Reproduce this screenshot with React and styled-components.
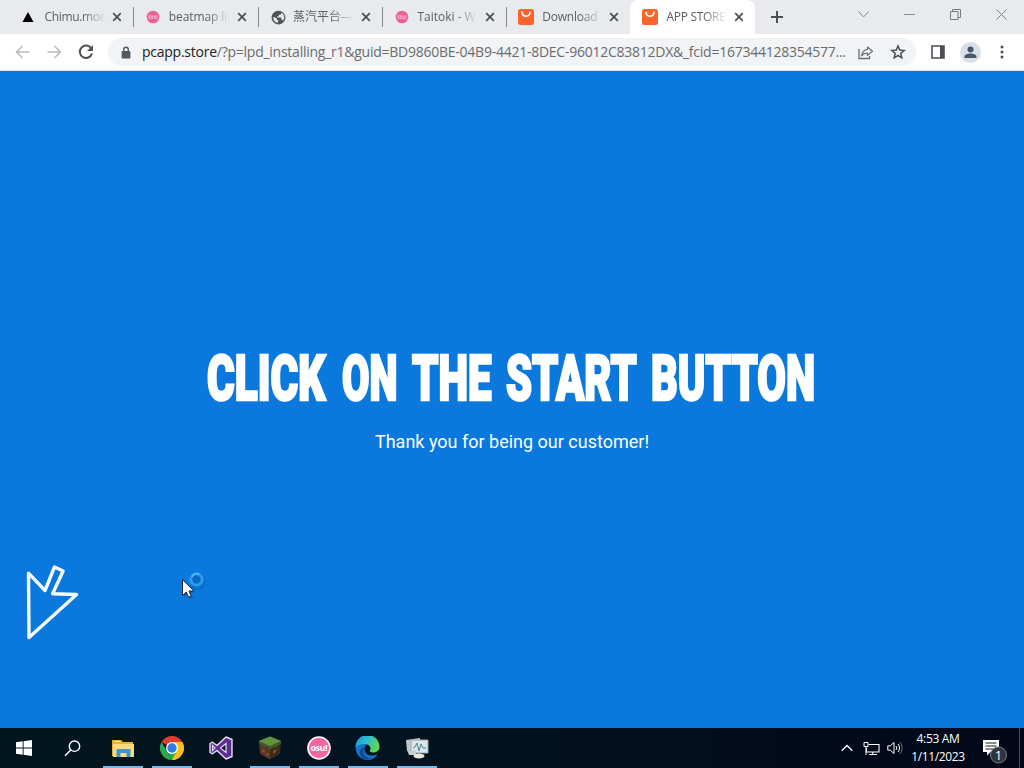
import React from "react";
import styled, { createGlobalStyle } from "styled-components";

const GlobalStyle = createGlobalStyle`
* {
    box-sizing: border-box;
}
body {
    margin: 0;
    overflow: hidden;
    font-family: "Open Sans", "Noto Sans CJK SC", sans-serif;
}
svg {
    display: block;
    flex: none;
}
`
const Screen = styled.div`
width: 1024px;
height: 768px;
display: flex;
flex-direction: column;
overflow: hidden;
`

/* ---- tab strip ---- */
const TabStrip = styled.div`
height: 34px;
flex: none;
display: flex;
background: #e8eaed;
padding-left: 9px;
`
const Tab = styled.div`
width: 124.3px;
height: 34px;
flex: none;
display: flex;
align-items: center;
padding: 0 11px 0 ${props => props.$big ? "12px" : "13px"};
border-radius: 8px 8px 0 0;
background: ${props => props.$active ? "#fff" : "transparent"};
`
const TabDivider = styled.span`
width: 1px;
height: 20px;
flex: none;
align-self: center;
margin: 0 -1px 0 0;
background: #85888c;
`
const Favicon = styled.span`
width: ${props => props.$big ? "24px" : "22.5px"};
flex: none;
`
const TabTitle = styled.span`
width: 61px;
flex: none;
overflow: hidden;
white-space: nowrap;
font-size: 12px;
line-height: 18px;
letter-spacing: ${props => props.$spacing || "0"};
color: #5c6065;
mask-image: linear-gradient(to right, #000 62%, transparent 100%);
`
const CloseIcon = styled.svg`
margin-left: auto;
`
const NewTab = styled.div`
width: 44px;
display: flex;
align-items: center;
justify-content: center;
`
const WindowButtons = styled.div`
margin-left: auto;
display: flex;
align-items: center;
height: 29px;
`
const WindowButton = styled.span`
width: 46px;
display: flex;
justify-content: center;
`

/* ---- toolbar ---- */
const Toolbar = styled.div`
height: 37px;
flex: none;
display: flex;
align-items: center;
background: #fff;
border-bottom: 1px solid #d5e6f5;
padding: 0 6px 0 6px;
`
const ToolButton = styled.span`
width: 32px;
flex: none;
display: flex;
align-items: center;
justify-content: center;
`
const AddressBar = styled.div`
width: 808px;
height: 28px;
flex: none;
display: flex;
align-items: center;
margin-left: 6px;
margin-right: 6px;
padding-left: 13px;
border-radius: 14px;
background: #f1f3f4;
`
const Url = styled.span`
width: 708px;
flex: none;
margin-left: 11px;
font-size: 14px;
line-height: 20px;
letter-spacing: -0.25px;
white-space: nowrap;
color: #686c71;
`
const Host = styled.span`
color: #202124;
`
const Avatar = styled.span`
width: 21px;
height: 21px;
border-radius: 50%;
background: #d9dfe6;
display: flex;
align-items: center;
justify-content: center;
`

/* ---- page ---- */
const Page = styled.main`
height: 657px;
flex: none;
position: relative;
background: #0a78dc;
color: #fff;
display: flex;
flex-direction: column;
align-items: center;
padding-top: 271px;
`
const Title = styled.h1`
margin: 0;
width: 610px;
height: 72px;
display: flex;
gap: 14px;
font-family: Roboto, sans-serif;
font-size: 63px;
line-height: 73px;
font-weight: 900;
-webkit-text-stroke: 2.6px #fff;
`
const Word = styled.span`
width: ${props => props.$width}px;
flex: none;
display: block;
white-space: nowrap;
`
const Squeeze = styled.span`
display: inline-block;
transform: scaleX(${props => props.$scale});
transform-origin: left center;
`
const Thanks = styled.p`
margin: 15px 0 0;
font-family: Roboto, sans-serif;
font-size: 18px;
line-height: 26px;
`
const StartArrow = styled.svg`
position: absolute;
left: 20px;
top: 485px;
`
const Pointer = styled.svg`
position: absolute;
left: 178px;
top: 497px;
`

/* ---- taskbar ---- */
const Taskbar = styled.footer`
height: 40px;
flex: none;
display: flex;
background: linear-gradient(to right, #02161f, #02131f 45%, #020a1c 80%, #020818);
color: #fff;
`
const TaskButton = styled.div`
width: ${props => props.$width || 49}px;
height: 40px;
flex: none;
display: flex;
align-items: center;
justify-content: center;
background: ${props => props.$open ? "linear-gradient(#76b9ed, #76b9ed) 5px 38px / 40px 2px no-repeat" : "none"};
`
const SearchButton = styled(TaskButton)`
margin-right: 2px;
`
const Tray = styled.div`
margin-left: auto;
display: flex;
align-items: center;
`
const TrayIcon = styled.span`
width: 24px;
display: flex;
justify-content: center;
`
const Clock = styled.div`
width: 62px;
text-align: center;
font-size: 12px;
line-height: 18px;
letter-spacing: -0.35px;
white-space: nowrap;
`
const Notifications = styled.span`
width: 50px;
height: 40px;
display: flex;
align-items: center;
padding-left: 12px;
`
const ShowDesktop = styled.span`
width: 5px;
height: 40px;
border-left: 1px solid #454c58;
`

const TriangleIcon = () => (
    <svg width="14" height="14"><path d="M6 2L11.500 12H.5z" fill="#000" /></svg>
)
const OsuIcon = () => (
    <svg width="14" height="14">
        <circle cx="7" cy="7" r="6.300" fill="#ed5f97" />
        <path d="M2.500 6.200h9M2.500 8.200h9" stroke="#f9c9dc" strokeWidth="1.200" strokeDasharray="2 .6" />
    </svg>
)
const GlobeIcon = () => (
    <svg width="15" height="15" viewBox="0 0 24 24">
        <path fill="#505459" d="M12 1C5.900 1 1 5.900 1 12s4.900 11 11 11 11-4.900 11-11S18.100 1 12 1zm-1.500 19.500C6.500 20 3.500 16.500 3.500 12l1-1 5 2.500v2l2.500 1.500zM19 17c-.5-1.500-1-2-2.500-2v-3H10v-2h2.500V7.500H15l2-3c3 2 4.500 5 4 8.500-.3 1.500-1 3-2 4z" />
    </svg>
)
const BagIcon = () => (
    <svg width="16" height="16">
        <rect width="16" height="16" rx="2.500" fill="#fa642d" />
        <path d="M4 3.200a4 4 0 0 0 8 0" fill="none" stroke="#fff" strokeWidth="1.700" strokeLinecap="round" />
    </svg>
)

const tabs = [
    { title: "Chimu.moe", icon: <TriangleIcon />, spacing: "-0.35px" },
    { title: "beatmap listing", icon: <OsuIcon />, spacing: "-0.1px" },
    { title: "蒸汽平台——", icon: <GlobeIcon /> },
    { title: "Taitoki - Wave", icon: <OsuIcon /> },
    { title: "Download", icon: <BagIcon />, big: true, spacing: "-0.2px" },
    { title: "APP STORE", icon: <BagIcon />, big: true, active: true, spacing: "-0.3px" },
]

const words = [
    { text: "CLICK", width: 121, scale: 0.672 },
    { text: "ON", width: 56, scale: 0.632 },
    { text: "THE", width: 80, scale: 0.667 },
    { text: "START", width: 131, scale: 0.661 },
    { text: "BUTTON", width: 166, scale: 0.658 },
]

const BrowserTabs = () => (
    <TabStrip>
        {tabs.map((tab, i) => (
            <React.Fragment key={tab.title}>
                <Tab $active={tab.active} $big={tab.big}>
                    <Favicon $big={tab.big}>{tab.icon}</Favicon>
                    <TabTitle $spacing={tab.spacing}>{tab.title}</TabTitle>
                    <CloseIcon width="10" height="10">
                        <path d="M1.200 1.200l7.600 7.600M8.800 1.200L1.200 8.800" stroke="#4b4e52" strokeWidth="1.700" />
                    </CloseIcon>
                </Tab>
                {i < 4 && <TabDivider />}
            </React.Fragment>
        ))}
        <NewTab>
            <svg width="12" height="12"><path d="M6 0v12M0 6h12" stroke="#4b4e52" strokeWidth="2" /></svg>
        </NewTab>
        <WindowButtons>
            <WindowButton>
                <svg width="11" height="7"><path d="M.5.5l5 5.500 5-5.500" fill="none" stroke="#8a8c8f" /></svg>
            </WindowButton>
            <WindowButton>
                <svg width="11" height="3"><path d="M0 1.500h11" stroke="#8a8c8f" /></svg>
            </WindowButton>
            <WindowButton>
                <svg width="11" height="11"><path d="M.5 2.500h7.500v8H.5zM2.500 2.500v-2h8v8H8" fill="none" stroke="#77797c" /></svg>
            </WindowButton>
            <WindowButton>
                <svg width="11" height="11"><path d="M.5.5l10 10M10.500.5l-10 10" stroke="#808285" /></svg>
            </WindowButton>
        </WindowButtons>
    </TabStrip>
)

const BrowserToolbar = () => (
    <Toolbar>
        <ToolButton>
            <svg width="15" height="14"><path d="M14.500 7H1.500M7.500 1L1.500 7l6 6" fill="none" stroke="#b9bbbe" strokeWidth="1.600" /></svg>
        </ToolButton>
        <ToolButton>
            <svg width="15" height="14"><path d="M.5 7h13M7.500 1l6 6-6 6" fill="none" stroke="#b9bbbe" strokeWidth="1.600" /></svg>
        </ToolButton>
        <ToolButton>
            <svg width="16" height="16">
                <path d="M13.300 4.500A6.200 6.200 0 1 0 14 9.500" fill="none" stroke="#4f5256" strokeWidth="2" />
                <path d="M15 1v6H9z" fill="#4f5256" />
            </svg>
        </ToolButton>
        <AddressBar>
            <svg width="10" height="13">
                <path d="M2.700 5.500V3.500a2.300 2.300 0 0 1 4.600 0v2" fill="none" stroke="#55585c" strokeWidth="1.400" />
                <rect x=".6" y="5" width="8.800" height="7.400" rx="1" fill="#55585c" />
            </svg>
            <Url><Host>pcapp.store</Host>/?p=lpd_installing_r1&amp;guid=BD9860BE-04B9-4421-8DEC-96012C83812DX&amp;_fcid=167344128354577...</Url>
            <ToolButton>
                <svg width="16" height="15">
                    <path d="M1 4v9.500h10.500V11" fill="none" stroke="#6a6d71" strokeWidth="1.300" />
                    <path d="M9.500 2l5 4.200-5 4.200V8C6.500 8 4.800 9 3.600 10.800 4 7.500 6 4.900 9.500 4.400z" fill="none" stroke="#6a6d71" strokeWidth="1.200" strokeLinejoin="round" />
                </svg>
            </ToolButton>
            <ToolButton>
                <svg width="16" height="16">
                    <path d="M8 1.900l1.700 4.200 4.500.4-3.400 2.900 1 4.400L8 11.500l-3.800 2.300 1-4.400-3.400-2.900 4.500-.4z" fill="none" stroke="#4f5256" strokeWidth="1.500" />
                </svg>
            </ToolButton>
        </AddressBar>
        <ToolButton>
            <svg width="14" height="14">
                <path d="M1 1h12v12H1z" fill="none" stroke="#4b4e52" strokeWidth="1.600" />
                <path d="M9 1h4v12H9z" fill="#4b4e52" />
            </svg>
        </ToolButton>
        <ToolButton>
            <Avatar>
                <svg width="13" height="13"><circle cx="6.500" cy="3.600" r="3" fill="#46566b" /><path d="M.5 12V10.500c0-2 3.500-3 6-3s6 1 6 3V12z" fill="#46566b" /></svg>
            </Avatar>
        </ToolButton>
        <ToolButton>
            <svg width="4" height="14"><g fill="#4b4e52"><circle cx="2" cy="2" r="1.500" /><circle cx="2" cy="7" r="1.500" /><circle cx="2" cy="12" r="1.500" /></g></svg>
        </ToolButton>
    </Toolbar>
)

const StartPage = () => (
    <Page>
        <Title>
            {words.map(word => (
                <Word key={word.text} $width={word.width}><Squeeze $scale={word.scale}>{word.text}</Squeeze></Word>
            ))}
        </Title>
        <Thanks>Thank you for being our customer!</Thanks>
        <StartArrow width="64" height="90">
            <path d="M8.500 17.200L25 34.500 34.500 11l8.600 4-10.500 22.700 24 .8L9 81.500z" fill="none" stroke="#f4fcff" strokeWidth="3.400" strokeLinejoin="round" />
        </StartArrow>
        {/* busy pointer */}
        <Pointer width="34" height="34">
            <ellipse cx="20" cy="14" rx="8" ry="8" fill="#0866bd" opacity=".5" />
            <circle cx="18.500" cy="11.500" r="5.700" fill="#0c68c3" stroke="#2c9be8" strokeWidth="3" />
            <path d="M14 8.500a5.500 5.500 0 0 1 7-2" fill="none" stroke="#5fbdf4" strokeWidth="1.500" />
            <path d="M6 14.500v15l3.500-3.500 2.500 5 3-1.500-2.500-4.500h4.500z" fill="#0757a5" opacity=".5" />
            <path d="M4.500 11.500v16l3.700-3.500 2.400 5.200 2.700-1.200-2.400-5h5z" fill="#fff" stroke="#14263c" />
        </Pointer>
    </Page>
)

const ChromeLogo = () => (
    <svg width="24" height="24">
        <path d="M12 12L1.600 6A12 12 0 0 1 22.400 6z" fill="#e33b2e" />
        <path d="M12 12V6h10.400A12 12 0 0 1 12 24z" fill="#fbc116" />
        <path d="M12 24A12 12 0 0 1 1.600 6l5.200 9z" fill="#2da94f" />
        <path d="M12 24l5.200-9H6.800z" fill="#2da94f" />
        <path d="M12 24l5.500-9-1-3 5.500-6A12 12 0 0 1 12 24z" fill="#fbc116" />
        <circle cx="12" cy="12" r="6" fill="#fff" />
        <circle cx="12" cy="12" r="4.700" fill="#2f7de1" />
    </svg>
)
const FolderIcon = () => (
    <svg width="22" height="19">
        <path d="M0 1h9l2 2h10v14H0z" fill="#e9b13c" />
        <path d="M1 5h21v13H1z" fill="#fbdc7c" />
        <path d="M4.500 10h14v8h-4v-4h-6v4h-4z" fill="#4195ca" />
        <path d="M3 2.500h5" stroke="#fff0b5" />
    </svg>
)
const VisualStudioIcon = () => (
    <svg width="24" height="24">
        <path d="M17 1l6 2.500v17L17 23 8 14.500l-4.500 3.300L1 16.500v-9l2.500-1.300L8 9.500z" fill="#5c2d91" stroke="#eadcf6" strokeWidth="1.400" strokeLinejoin="round" />
        <path d="M17 7.500v9L11.500 12zM3.500 9.500v5L6 12z" fill="#02161f" stroke="#eadcf6" strokeWidth="1.200" />
    </svg>
)
const GrassBlockIcon = () => (
    <svg width="24" height="24">
        <path d="M1 5l11 5v13.500L2 18z" fill="#593723" />
        <path d="M23 5l-11 5v13.500L22 18z" fill="#402819" />
        <path d="M12 .5L23 5v3l-3 1.500-2 2-2-.5-4 3-3-3.500-3 .5-2-2.500L1 8V5z" fill="#3f5c28" />
        <path d="M12 .5L23 5l-11 5L1 5z" fill="#66913f" />
        <path d="M4 13l3 1v3l-3-1zM15 15l3-2v3l-3 2zM8 17l3 1v2l-3-1z" fill="#7d5336" />
    </svg>
)
const OsuText = styled.text`
font-family: "Open Sans", sans-serif;
font-size: 9px;
font-weight: 700;
`
const OsuLogo = () => (
    <svg width="24" height="24">
        <circle cx="12" cy="12" r="11" fill="#f366a3" stroke="#fff" strokeWidth="1.600" />
        <OsuText x="12" y="15" textAnchor="middle" fill="#fff" textLength="17">osu!</OsuText>
    </svg>
)
const EdgeLogo = () => (
    <svg width="25" height="24" viewBox="0 0 24 24">
        <defs>
            <linearGradient id="edgeTop" x1="0" y1="0" x2="1" y2=".4">
                <stop offset="0" stopColor="#1f8fdc" />
                <stop offset=".5" stopColor="#28bed0" />
                <stop offset="1" stopColor="#61d654" />
            </linearGradient>
        </defs>
        <path d="M0 11C1 5 8 5 12 8c-2 1-4 4-2.500 8 1.800 4 7.500 4.500 12.500 2-2 4-6 6-10 6C5 24 0 18.500 0 11z" fill="#1673c9" />
        <path d="M0 11A12 12 0 0 1 24 11c.2 5-7 7-9.500 4.500-.8-.9.500-1.300.5-3C15 10 12.500 8 9 8c-4 0-7 1.500-9 3z" fill="url(#edgeTop)" />
        <path d="M9 11c-3.500 5 1 12 7 11.600C12 25 5.500 23.500 4.300 18 3.600 14.500 6 11.500 9 11z" fill="#114b94" />
    </svg>
)
const MonitorAppIcon = () => (
    <svg width="24" height="22">
        <path d="M1 3l14-2v11L2 14z" fill="#bfc9cd" />
        <path d="M6 3h17v13H6z" fill="#dce5e8" stroke="#9aa9ae" />
        <path d="M8 11l2-1 2-4 2 8 2-7 2 4h3" fill="none" stroke="#4a8795" />
        <path d="M2 13l9 1v4H4z" fill="#c6cecf" />
        <ellipse cx="14" cy="19" rx="5.500" ry="2.500" fill="#ece6dd" />
    </svg>
)

const WindowsTaskbar = () => (
    <Taskbar>
        <TaskButton $width={48}>
            <svg width="16" height="16"><path d="M0 2.300l6.700-1v6.300H0zM7.600 1.200L16 0v7.600H7.600zM0 8.500h6.700v6.200L0 13.800zM7.600 8.500H16V16l-8.400-1.200z" fill="#fff" /></svg>
        </TaskButton>
        <SearchButton $width={48}>
            <svg width="17" height="17"><circle cx="10.500" cy="6.200" r="5.200" fill="none" stroke="#fff" strokeWidth="1.400" /><path d="M6.800 10L1 15.800" stroke="#fff" strokeWidth="1.500" /></svg>
        </SearchButton>
        <TaskButton $open><FolderIcon /></TaskButton>
        <TaskButton $open><ChromeLogo /></TaskButton>
        <TaskButton><VisualStudioIcon /></TaskButton>
        <TaskButton $open><GrassBlockIcon /></TaskButton>
        <TaskButton $open><OsuLogo /></TaskButton>
        <TaskButton $open><EdgeLogo /></TaskButton>
        <TaskButton $open><MonitorAppIcon /></TaskButton>
        <Tray>
            <TrayIcon>
                <svg width="12" height="8"><path d="M.7 6.800L6 1.500l5.300 5.300" fill="none" stroke="#fff" strokeWidth="1.300" /></svg>
            </TrayIcon>
            <TrayIcon>
                <svg width="17" height="15">
                    <path d="M5.500 3.500h10.500v7.500H3.500V7M6 13.500h8M9.800 11v2.500" fill="none" stroke="#fff" strokeWidth="1.100" />
                    <path d="M1 1.500h4v4H1zM3 5.500V14" fill="none" stroke="#fff" />
                </svg>
            </TrayIcon>
            <TrayIcon>
                <svg width="16" height="14">
                    <path d="M.8 4.800h2.500L7 1.500v11L3.300 9.200H.8z" fill="none" stroke="#fff" />
                    <path d="M9 5a3 3 0 0 1 0 4M11 3a6 6 0 0 1 0 8" fill="none" stroke="#fff" />
                    <path d="M13 1.200a9 9 0 0 1 0 11.600" fill="none" stroke="#68717e" />
                </svg>
            </TrayIcon>
            <Clock>4:53 AM<br />1/11/2023</Clock>
            <Notifications>
                <svg width="27" height="32">
                    <path d="M2 8h16v12H9.500L6 23.500V20H2z" fill="#fff" />
                    <path d="M4.500 11h11M4.500 14h11M4.500 17h8" stroke="#111827" />
                    <circle cx="17.500" cy="23" r="8" fill="#30343b" stroke="#777b82" />
                    <text x="17.500" y="27.500" textAnchor="middle" fontSize="13" fill="#fff">1</text>
                </svg>
            </Notifications>
            <ShowDesktop />
        </Tray>
    </Taskbar>
)

const App = () => {
    return (
        <>
        <GlobalStyle />
        <Screen>
            <BrowserTabs />
            <BrowserToolbar />
            <StartPage />
            <WindowsTaskbar />
        </Screen>
        </>
    )
};

export default App;
